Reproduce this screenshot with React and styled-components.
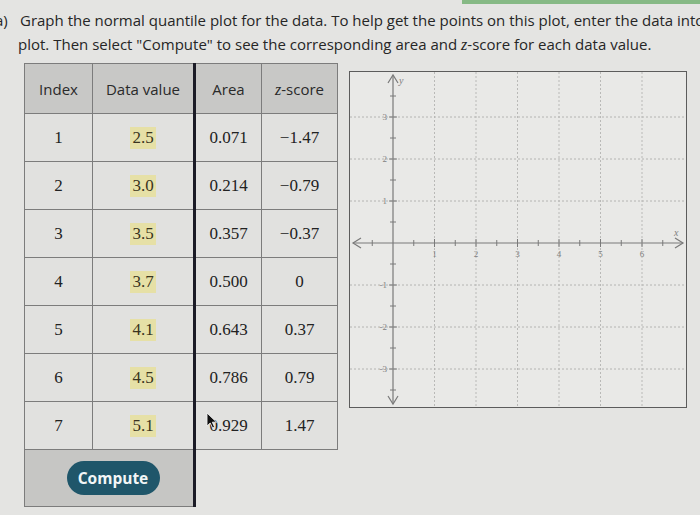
import React from "react";
import styled, { createGlobalStyle } from "styled-components";

const GlobalStyle = createGlobalStyle`
  html, body {
    margin: 0;
    padding: 0;
    background: #e4e4e2;
    overflow: hidden;
  }
  body {
    width: 700px;
    height: 515px;
    font-family: "Open Sans", "DejaVu Sans", sans-serif;
    color: #262626;
  }
`;

const Page = styled.div`
  position: relative;
  width: 700px;
  height: 515px;
  overflow: hidden;
`;

const TopStrip = styled.div`
  position: absolute;
  top: 0;
  left: 462px;
  right: 0;
  height: 4px;
  background: #86b985;
`;

const Prompt = styled.div`
  padding: 8px 0 0 18px;
  font-size: 15px;
  line-height: 24px;
`;

const Line = styled.div`
  white-space: nowrap;
`;

const Label = styled.span`
  display: inline-block;
  width: 25px;
  margin-left: -23px;
`;

const Var = styled.i`
  font-family: "Liberation Serif", serif;
  font-size: 16px;
`;

const Main = styled.div`
  display: flex;
  align-items: flex-start;
  gap: 11px;
  margin: 6px 0 0 24px;
`;

const Table = styled.table`
  border-collapse: collapse;
  table-layout: fixed;
`;

const Head = styled.th`
  width: ${(p) => p.w}px;
  height: 49px;
  padding: 0;
  background: #c8c8c6;
  border: 1px solid #7c7c7c;
  border-right: ${(p) => (p.split ? "3px solid #1b1b26" : "1px solid #7c7c7c")};
  font-weight: normal;
  font-size: 15px;
  color: #2a2a2a;
  vertical-align: middle;
`;

const Cell = styled.td`
  height: 47px;
  padding: 0;
  background: #e1e1df;
  border: 1px solid #7c7c7c;
  border-right: ${(p) => (p.split ? "3px solid #1b1b26" : "1px solid #7c7c7c")};
  text-align: center;
  vertical-align: middle;
  font-family: "Liberation Serif", serif;
  font-size: 17px;
  color: #222;
`;

const CellInner = styled.span`
  position: relative;
  display: inline-block;
`;

const Entry = styled.span`
  display: inline-block;
  padding: 1px 2px;
  background: #e6e0a6;
  color: #3a3420;
`;

const ComputeCell = styled.td`
  height: 56px;
  padding: 0;
  background: #c6c6c4;
  border: 1px solid #7c7c7c;
  border-right: 3px solid #1b1b26;
  text-align: center;
  vertical-align: middle;
`;

const Blank = styled.td`
  border: none;
  border-top: 1px solid #7c7c7c;
  background: transparent;
`;

const Button = styled.button`
  width: 93px;
  height: 34px;
  margin-left: 8px;
  border: none;
  border-radius: 17px;
  background: #1f566a;
  color: #f2f6f7;
  font-family: "Open Sans", "DejaVu Sans", sans-serif;
  font-weight: 700;
  font-size: 15.5px;
  cursor: pointer;
`;

const Cursor = styled.svg`
  position: absolute;
  left: -3px;
  top: -4px;
`;

const PlotBox = styled.div`
  margin-top: 8px;
  width: 336px;
  height: 335px;
  border: 1.5px solid #5c5c5c;
  background: #e9e9e7;
`;

const rows = [
  [1, "2.5", "0.071", "−1.47"],
  [2, "3.0", "0.214", "−0.79"],
  [3, "3.5", "0.357", "−0.37"],
  [4, "3.7", "0.500", "0"],
  [5, "4.1", "0.643", "0.37"],
  [6, "4.5", "0.786", "0.79"],
  [7, "5.1", "0.929", "1.47"],
];

function Plot() {
  const W = 336;
  const H = 335;
  const ox = 43;
  const oy = 171;
  const ux = 41.5;
  const uy = 42;
  const ink = "#7a7a7a";
  const xs = [1, 2, 3, 4, 5, 6];
  const ys = [3, 2, 1, -1, -2, -3];
  const halfX = [];
  for (let v = -0.5; v <= 6.5; v += 0.5) halfX.push(v);
  const halfY = [];
  for (let v = -3.5; v <= 3.5; v += 0.5) halfY.push(v);

  return (
    <svg width={W} height={H} style={{ display: "block" }}>
      {xs.map((i) => (
        <line
          key={"gx" + i}
          x1={ox + i * ux}
          x2={ox + i * ux}
          y1={0}
          y2={H}
          stroke="#b9b9b7"
          strokeDasharray="2 2"
        />
      ))}
      {ys.map((j) => (
        <line
          key={"gy" + j}
          x1={0}
          x2={W}
          y1={oy - j * uy}
          y2={oy - j * uy}
          stroke="#b4b4b2"
          strokeDasharray="2 2"
        />
      ))}
      <line x1={3} x2={W - 3} y1={oy} y2={oy} stroke={ink} strokeWidth="1.2" />
      <line x1={ox} x2={ox} y1={3} y2={H - 3} stroke={ink} strokeWidth="1.2" />
      <path d={`M11 ${oy - 5} L3 ${oy} L11 ${oy + 5}`} fill="none" stroke={ink} strokeWidth="1.2" />
      <path d={`M${W - 11} ${oy - 5} L${W - 3} ${oy} L${W - 11} ${oy + 5}`} fill="none" stroke={ink} strokeWidth="1.2" />
      <path d={`M${ox - 5} 11 L${ox} 3 L${ox + 5} 11`} fill="none" stroke={ink} strokeWidth="1.2" />
      <path d={`M${ox - 5} ${H - 11} L${ox} ${H - 3} L${ox + 5} ${H - 11}`} fill="none" stroke={ink} strokeWidth="1.2" />
      {halfX.map((v) =>
        v === 0 ? null : (
          <line
            key={"tx" + v}
            x1={ox + v * ux}
            x2={ox + v * ux}
            y1={oy - (Number.isInteger(v) ? 4 : 3)}
            y2={oy + (Number.isInteger(v) ? 4 : 3)}
            stroke={ink}
          />
        )
      )}
      {halfY.map((v) =>
        v === 0 ? null : (
          <line
            key={"ty" + v}
            y1={oy - v * uy}
            y2={oy - v * uy}
            x1={ox - (Number.isInteger(v) ? 4 : 3)}
            x2={ox + (Number.isInteger(v) ? 4 : 3)}
            stroke={ink}
          />
        )
      )}
      <g fontFamily="Liberation Serif, serif" fontSize="9" fill="#808080">
        {xs.map((i) => (
          <text key={"lx" + i} x={ox + i * ux} y={oy + 14} textAnchor="middle">
            {i}
          </text>
        ))}
        {ys.map((j) => (
          <text key={"ly" + j} x={ox - 6} y={oy - j * uy + 3} textAnchor="end">
            {j}
          </text>
        ))}
        <text x={ox + 6} y={12} fontStyle="italic" fontSize="10">
          y
        </text>
        <text x={W - 12} y={oy - 7} fontStyle="italic" fontSize="10">
          x
        </text>
      </g>
    </svg>
  );
}

export default function App() {
  return (
    <Page>
      <GlobalStyle />
      <TopStrip />
      <Prompt>
        <Line>
          <Label>a)</Label>Graph the normal quantile plot for the data. To help get the points on this plot, enter the data into
        </Line>
        <Line>
          plot. Then select "Compute" to see the corresponding area and <Var>z</Var>-score for each data value.
        </Line>
      </Prompt>
      <Main>
        <Table>
          <thead>
            <tr>
              <Head w={67}>Index</Head>
              <Head w={100} split>
                Data value
              </Head>
              <Head w={65}>Area</Head>
              <Head w={75}>
                <Var>z</Var>-score
              </Head>
            </tr>
          </thead>
          <tbody>
            {rows.map(([idx, val, area, z]) => (
              <tr key={idx}>
                <Cell>{idx}</Cell>
                <Cell split>
                  <Entry>{val}</Entry>
                </Cell>
                <Cell>
                  <CellInner>
                    {area}
                    {idx === 7 && (
                      <Cursor width="12" height="17" viewBox="0 0 12 17">
                        <path
                          d="M1 1 L1 14 L4.2 11 L6.6 16 L8.6 15.1 L6.3 10.2 L10.6 10.2 Z"
                          fill="#111"
                          stroke="#eee"
                          strokeWidth="0.9"
                        />
                      </Cursor>
                    )}
                  </CellInner>
                </Cell>
                <Cell>{z}</Cell>
              </tr>
            ))}
            <tr>
              <ComputeCell colSpan={2}>
                <Button>Compute</Button>
              </ComputeCell>
              <Blank colSpan={2} />
            </tr>
          </tbody>
        </Table>
        <PlotBox>
          <Plot />
        </PlotBox>
      </Main>
    </Page>
  );
}
